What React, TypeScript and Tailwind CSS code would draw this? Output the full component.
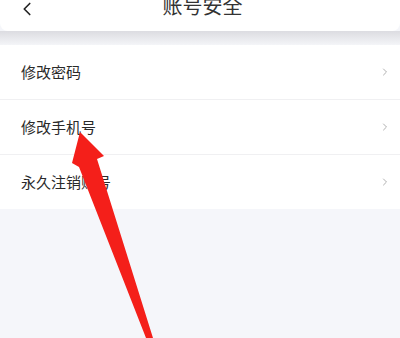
import { ChevronLeft, ChevronRight } from 'lucide-react'

const items = ['修改密码', '修改手机号', '永久注销账号']

export default function App() {
  return (
    <div
      className="relative w-[400px] h-[338px] overflow-hidden bg-[#f5f6fa]"
      style={{ fontFamily: '"Noto Sans", "Noto Sans CJK SC", sans-serif' }}
    >
      {/* Header */}
      <div className="relative z-10 h-[31px] bg-white rounded-b-lg flex items-start">
        <div className="w-[56px] pl-[16px] -mt-[2px]">
          <ChevronLeft className="w-[22px] h-[22px] text-[#222]" strokeWidth={1.8} />
        </div>
        <div className="flex-1 text-center -mt-[5px] pl-[5px] pr-[56px] text-[20px] leading-[24px] text-[#333]">
          账号安全
        </div>
      </div>
      <div className="h-[14px] bg-gradient-to-b from-[#dcdce1] to-[#f4f5f8]" />

      {/* List */}
      <div className="bg-white">
        {items.map((label, i) => (
          <div key={label}>
            <div className="h-[54px] flex items-center justify-between pl-[21px] pr-[9px]">
              <span className="text-[15px] leading-[20px] text-[#2a2a2a]">{label}</span>
              <ChevronRight className="w-[12px] h-[12px] text-[#b0b0b0]" strokeWidth={2} />
            </div>
            {i < items.length - 1 && <div className="h-px bg-[#f0f0f2]" />}
          </div>
        ))}
      </div>

      {/* Red annotation arrow */}
      <svg className="absolute inset-0 z-20 pointer-events-none" width="400" height="338" viewBox="0 0 400 338">
        <polygon
          points="80,132 104,156 97,159 153,338 146,338 79,167 72,163"
          fill="#f41f1a"
        />
      </svg>
    </div>
  )
}
